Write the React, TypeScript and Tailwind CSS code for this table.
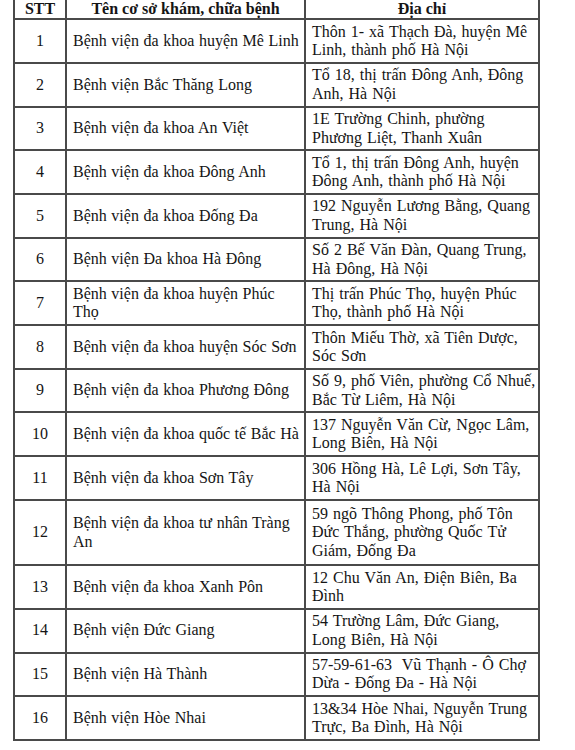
const rows: { stt: string; name: string[]; addr: string[]; tall?: boolean }[] = [
  { stt: "1", name: ["Bệnh viện đa khoa huyện Mê Linh"], addr: ["Thôn 1- xã Thạch Đà, huyện Mê", "Linh, thành phố Hà Nội"] },
  { stt: "2", name: ["Bệnh viện Bắc Thăng Long"], addr: ["Tổ 18, thị trấn Đông Anh, Đông", "Anh, Hà Nội"] },
  { stt: "3", name: ["Bệnh viện đa khoa An Việt"], addr: ["1E Trường Chinh, phường", "Phương Liệt, Thanh Xuân"] },
  { stt: "4", name: ["Bệnh viện đa khoa Đông Anh"], addr: ["Tổ 1, thị trấn Đông Anh, huyện", "Đông Anh, thành phố Hà Nội"] },
  { stt: "5", name: ["Bệnh viện đa khoa Đống Đa"], addr: ["192 Nguyễn Lương Bằng, Quang", "Trung, Hà Nội"] },
  { stt: "6", name: ["Bệnh viện Đa khoa Hà Đông"], addr: ["Số 2 Bế Văn Đàn, Quang Trung,", "Hà Đông, Hà Nội"] },
  { stt: "7", name: ["Bệnh viện đa khoa huyện Phúc", "Thọ"], addr: ["Thị trấn Phúc Thọ, huyện Phúc", "Thọ, thành phố Hà Nội"] },
  { stt: "8", name: ["Bệnh viện đa khoa huyện Sóc Sơn"], addr: ["Thôn Miếu Thờ, xã Tiên Dược,", "Sóc Sơn"] },
  { stt: "9", name: ["Bệnh viện đa khoa Phương Đông"], addr: ["Số 9, phố Viên, phường Cổ Nhuế,", "Bắc Từ Liêm, Hà Nội"] },
  { stt: "10", name: ["Bệnh viện đa khoa quốc tế Bắc Hà"], addr: ["137 Nguyễn Văn Cừ, Ngọc Lâm,", "Long Biên, Hà Nội"] },
  { stt: "11", name: ["Bệnh viện đa khoa Sơn Tây"], addr: ["306 Hồng Hà, Lê Lợi, Sơn Tây,", "Hà Nội"] },
  { stt: "12", name: ["Bệnh viện đa khoa tư nhân Tràng", "An"], addr: ["59 ngõ Thông Phong, phố Tôn", "Đức Thắng, phường Quốc Tử", "Giám, Đống Đa"], tall: true },
  { stt: "13", name: ["Bệnh viện đa khoa Xanh Pôn"], addr: ["12 Chu Văn An, Điện Biên, Ba", "Đình"] },
  { stt: "14", name: ["Bệnh viện Đức Giang"], addr: ["54 Trường Lâm, Đức Giang,", "Long Biên, Hà Nội"] },
  { stt: "15", name: ["Bệnh viện Hà Thành"], addr: ["57-59-61-63\u00a0 Vũ Thạnh - Ô Chợ", "Dừa - Đống Đa - Hà Nội"] },
  { stt: "16", name: ["Bệnh viện Hòe Nhai"], addr: ["13&34 Hòe Nhai, Nguyễn Trung", "Trực, Ba Đình, Hà Nội"] },
];

export default function App() {
  return (
    <div className="w-[575px] h-[750px] bg-white overflow-hidden font-['Liberation_Serif',serif] text-[16px] text-[#151515]">
      <div className="ml-[13px] w-[527px] border-l-2 border-[#4a4a4a]">
        {/* header */}
        <div className="flex h-[20.3px] border-b-2 border-[#4a4a4a] font-bold leading-[17px]">
          <div className="w-[52px] border-r-2 border-[#4a4a4a] text-center">STT</div>
          <div className="w-[239px] border-r-2 border-[#4a4a4a] text-center">Tên cơ sở khám, chữa bệnh</div>
          <div className="w-[234px] border-r-2 border-[#4a4a4a] text-center">Địa chỉ</div>
        </div>

        {rows.map((r) => (
          <div
            key={r.stt}
            className={`flex border-b-2 border-[#4a4a4a] leading-[18.4px] ${r.tall ? "h-[65.3px]" : "h-[43.7px]"}`}
          >
            <div className="w-[52px] border-r-2 border-[#4a4a4a] flex items-center justify-center">{r.stt}</div>
            <div className="w-[239px] border-r-2 border-[#4a4a4a] flex flex-col justify-center pl-[6px] [word-spacing:0.6px]">
              {r.name.map((l) => (
                <div key={l} className="whitespace-nowrap">{l}</div>
              ))}
            </div>
            <div className="w-[234px] border-r-2 border-[#4a4a4a] flex flex-col justify-center pl-[6px] [word-spacing:1px]">
              {r.addr.map((l) => (
                <div key={l} className="whitespace-nowrap">{l}</div>
              ))}
            </div>
          </div>
        ))}
      </div>
    </div>
  );
}
